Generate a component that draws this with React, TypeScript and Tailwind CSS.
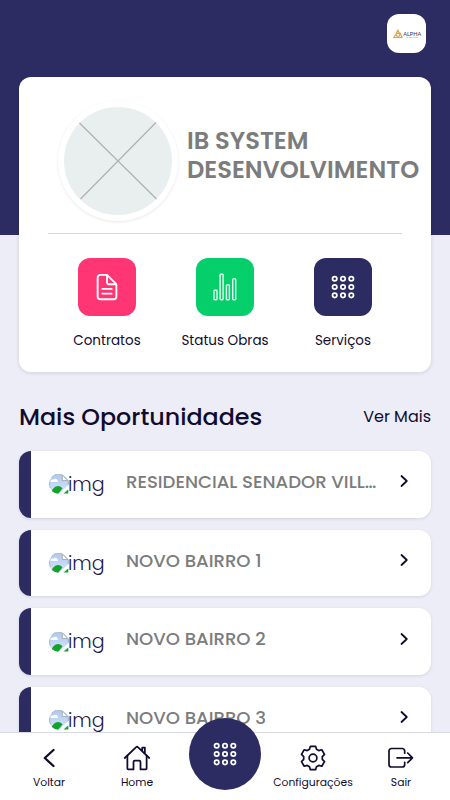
import type { ReactNode } from "react";
import { IoAppsOutline, IoDocumentTextOutline, IoHomeOutline } from "react-icons/io5";

const opportunities = [
  "RESIDENCIAL SENADOR VILL…",
  "NOVO BAIRRO 1",
  "NOVO BAIRRO 2",
  "NOVO BAIRRO 3",
];

function AlphaLogo() {
  return (
    <svg viewBox="0 0 38 38" className="size-[38px]">
      <g fill="none" stroke="#dfa64b" strokeWidth="1.2">
        <path d="M9.8 15.2l1.8 3.2H8.4zM8 19.3l1.8 3.2H5.9zM12.2 18.6l2 3.9h-3.6z" />
      </g>
      <text x="15.2" y="20.7" fill="#34335f" fontSize="6" fontFamily="Lato, sans-serif" fontWeight="400" textLength="18" lengthAdjust="spacingAndGlyphs">ALPHA</text>
      <text x="18.5" y="23" fill="#77778f" fontSize="1.8" fontFamily="Lato, sans-serif" textLength="12">ENGENHARIA</text>
    </svg>
  );
}

function BrokenImage() {
  return (
    <span className="flex w-[77px] shrink-0 items-center text-[#1b1748]">
      <svg viewBox="0 0 20 20" className="size-5 shrink-0">
        <defs>
          <clipPath id="thumb-circle"><circle cx="10" cy="10" r="10" /></clipPath>
          <linearGradient id="thumb-sky" x1="0" y1="0" x2="0" y2="1">
            <stop offset="0" stopColor="#adc8f2" />
            <stop offset="1" stopColor="#d8e5fa" />
          </linearGradient>
        </defs>
        <g clipPath="url(#thumb-circle)">
          <path d="M0 0h13l7 6v14H0z" fill="url(#thumb-sky)" />
          <path d="M1.5 8c0-2 1.5-3 3-2.3C5.500 3.800 9 4.500 8.800 8z" fill="#fff" />
          <path d="M2 19c1-4 4-7 7-7 2 0 3.500 1 4.500 2.500L9 20z" fill="#13a32a" />
        </g>
        <path d="M13.300 1v5.500h5.500z" fill="#fff" stroke="#a6a9ae" strokeWidth=".9" />
        <path d="M19.300 6.500v5" stroke="#a6a9ae" strokeWidth=".9" />
        <path d="M20 10.500L9.500 20H13l7-6z" fill="#fff" />
        <path d="M19.300 15.500V19.500H14.500z" fill="#13a32a" />
        <path d="M2.500 3.500A9.500 9.500 0 0 1 13 .7M.7 7.500A9.500 9.500 0 0 0 1.500 14" fill="none" stroke="#a6b0bd" strokeWidth=".8" />
      </svg>
      <span className="-ml-px pt-px text-[19px] font-light leading-5">img</span>
    </span>
  );
}

function StatsIcon() {
  return (
    <svg viewBox="0 0 24 28" className="h-7 w-6" fill="none" stroke="#e2fff0" strokeWidth="1.4">
      <rect x="1" y="17.2" width="3" height="9.6" rx=".7" />
      <rect x="7.1" y="1.200" width="3" height="25.600" rx=".7" />
      <rect x="13.400" y="11.900" width="3" height="14.900" rx=".7" />
      <rect x="19.700" y="5.900" width="3" height="20.900" rx=".7" />
    </svg>
  );
}

function GearIcon() {
  return (
    <svg viewBox="-14 -14 28 28" className="size-7" fill="none" stroke="currentColor" strokeWidth="1.7" strokeLinejoin="round">
      <path d="M-2.600-11.700H2.600L3.500-8.700L5.800-7.400L8.800-8.200L11.500-3.600L9.300-1.300V1.300L11.500 3.600L8.800 8.200L5.800 7.400L3.500 8.700L2.600 11.700H-2.600L-3.500 8.700L-5.800 7.400L-8.800 8.200L-11.500 3.600L-9.300 1.300V-1.300L-11.500-3.600L-8.800-8.200L-5.800-7.400L-3.500-8.700z" />
      <circle r="3.900" />
    </svg>
  );
}

function ExitIcon() {
  return (
    <svg viewBox="0 0 28 28" className="size-7" fill="none" stroke="currentColor" strokeWidth="1.7" strokeLinecap="round" strokeLinejoin="round">
      <path d="M17.700 9.200V7a2.500 2.500 0 0 0-2.500-2.500H4.500A2.500 2.500 0 0 0 2 7v13.500A2.500 2.500 0 0 0 4.500 23h10.700a2.500 2.500 0 0 0 2.500-2.500v-2.200M10 13.800h15.500M20.700 9l4.800 4.800-4.800 4.800" />
    </svg>
  );
}

function BackIcon() {
  return (
    <svg viewBox="0 0 28 28" className="size-7" fill="none" stroke="currentColor" strokeWidth="2.300" strokeLinecap="round" strokeLinejoin="round">
      <path d="M18.500 6l-8.700 8 8.700 8" />
    </svg>
  );
}

function Shortcut({ label, color, children }: { label: string; color: string; children: ReactNode }) {
  return (
    <div className="flex w-[118px] flex-col items-center">
      <div className={`flex size-[58px] items-center justify-center rounded-[12px] text-white ${color}`}>{children}</div>
      <span className="mt-[15px] whitespace-nowrap text-[13.5px] leading-5 text-[#110b30]">{label}</span>
    </div>
  );
}

function NavItem({ label, children }: { label: string; children: ReactNode }) {
  return (
    <div className="flex w-[88px] flex-col items-center pt-[11px] text-[28px] text-[#110b30]">
      {children}
      <span className="mt-[3px] whitespace-nowrap text-[10.8px] leading-4">{label}</span>
    </div>
  );
}

export default function App() {
  return (
    <div className="relative flex h-[800px] w-[450px] flex-col overflow-hidden bg-[#ecedf6] font-['Poppins',Inter,sans-serif]">
      <header className="flex h-[235px] shrink-0 items-start justify-end bg-[#2c2b62] pr-6 pt-[14px]">
        <div className="flex size-[39px] items-center justify-center rounded-[12px] bg-white"><AlphaLogo /></div>
      </header>

      <main className="relative -mt-[158px] flex flex-col px-[19px]">
        <section className="h-[295px] shrink-0 rounded-[12px] bg-white shadow-[0_1px_4px_rgba(40,40,80,0.14)]">
          <div className="flex h-[156px] items-center pl-[39px] pt-[12px]">
            <div className="flex size-[120px] shrink-0 items-center justify-center rounded-full bg-white shadow-[0_1px_3px_rgba(0,0,0,0.09)]">
              <svg viewBox="0 0 108 108" className="size-[108px]">
                <circle cx="54" cy="54" r="54" fill="#e9efef" />
                <path d="M15.500 16l77 76M92 15.500L16.500 92" stroke="#aeb1b1" strokeWidth="1.200" />
              </svg>
            </div>
            <h1 className="-mt-[12px] ml-[9px] whitespace-nowrap text-[24.2px] font-semibold leading-[29px] text-[#7b7c7c]">
              <span className="block">IB SYSTEM</span>
              <span className="block">DESENVOLVIMENTO</span>
            </h1>
          </div>
          <div className="mx-[29px] border-t border-[#d5d5df]" />
          <div className="flex justify-center pt-6">
            <Shortcut label="Contratos" color="bg-[#ff3673]"><IoDocumentTextOutline className="size-[30px]" /></Shortcut>
            <Shortcut label="Status Obras" color="bg-[#05cf6b]"><StatsIcon /></Shortcut>
            <Shortcut label="Serviços" color="bg-[#2c2b62]"><IoAppsOutline className="size-7" /></Shortcut>
          </div>
        </section>

        <div className="flex h-[79px] shrink-0 items-center justify-between pt-[10px] text-[#110b30]">
          <h2 className="text-[23.8px] font-medium leading-8">Mais Oportunidades</h2>
          <a className="text-[16px] leading-6">Ver Mais</a>
        </div>

        <div className="flex flex-col gap-3">
          {opportunities.map((name) => (
            <article key={name} className="flex h-[66.7px] shrink-0 items-center overflow-hidden rounded-[12px] border-l-[12px] border-[#2c2b62] bg-white px-[18px] shadow-[0_1px_3px_rgba(40,40,80,0.12)]">
              <BrokenImage />
              <h3 className="whitespace-nowrap pb-[5px] text-[18.1px] font-medium leading-6 text-[#7b7c7c]">{name}</h3>
              <svg viewBox="0 0 18 18" className="mb-[6px] ml-auto size-[18px] text-[#110b30]" fill="none" stroke="currentColor" strokeWidth="1.800" strokeLinecap="round" strokeLinejoin="round">
                <path d="M6.500 4l5.300 5-5.300 5" />
              </svg>
            </article>
          ))}
        </div>
      </main>

      <nav className="absolute inset-x-0 bottom-0 flex h-[68px] items-start justify-center border-t border-[#d7d8e5] bg-white">
        <NavItem label="Voltar"><BackIcon /></NavItem>
        <NavItem label="Home"><IoHomeOutline /></NavItem>
        <div className="flex w-[88px] shrink-0 justify-center">
          <div className="-mt-[15px] flex size-[72px] items-center justify-center rounded-full bg-[#2c2b62] text-white"><IoAppsOutline className="size-7" /></div>
        </div>
        <NavItem label="Configurações"><GearIcon /></NavItem>
        <NavItem label="Sair"><ExitIcon /></NavItem>
      </nav>
    </div>
  );
}
